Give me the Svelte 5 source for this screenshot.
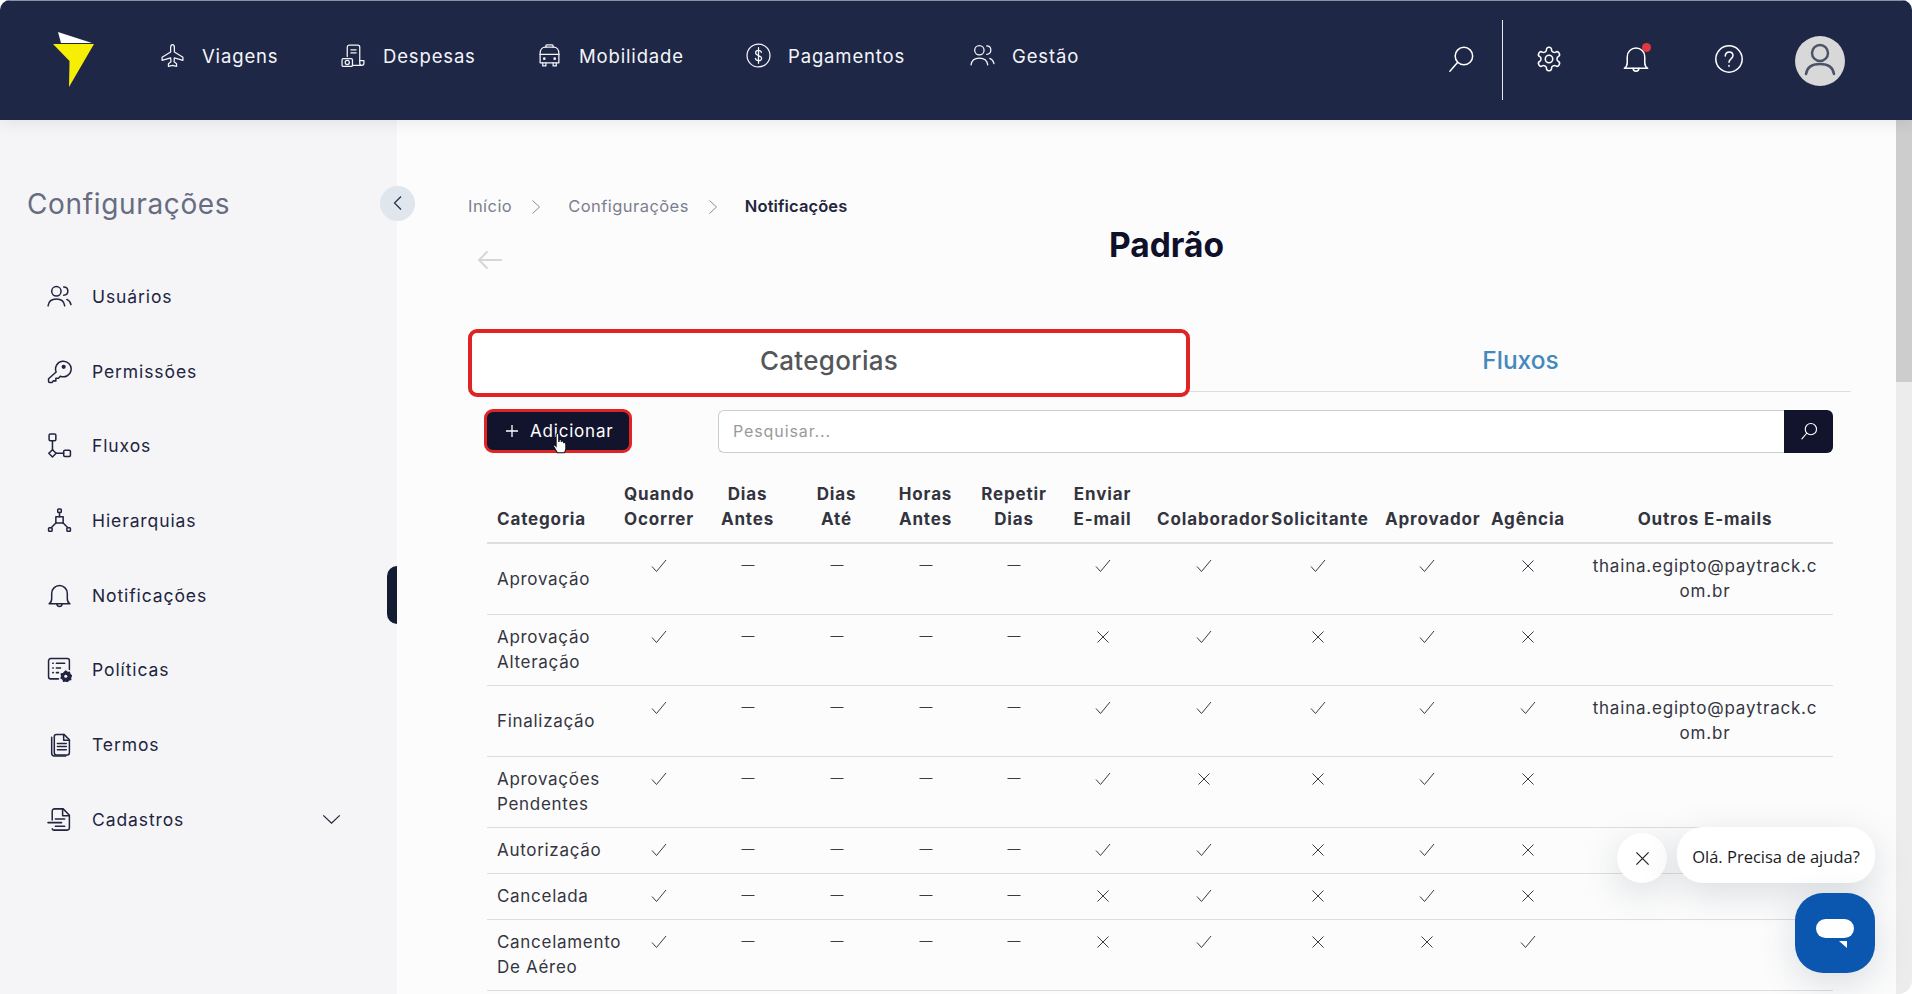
<script>
  const icons = {
    plane: '<path d="M12 1.500c-1.100 0-1.800 1.300-1.800 3v4.200L2 13.600v3l8.200-2.400.3 3.800-2.400 1.800v2.700l3.900-1 3.900 1v-2.700L13.500 18l.3-3.800 8.200 2.400v-3l-8.200-4.900V4.500c0-1.700-.7-3-1.800-3z"/>',
    expense: '<path d="M6 13V4a2 2 0 0 1 2-2h8a2 2 0 0 1 2 2v15.500c0 1.500 1 2 1.800 2H11"/><path d="M18 17h4v2.500a2 2 0 0 1-2 2"/><path d="M9.500 6.500h5M9.500 9.500h5"/><rect x="1" y="15" width="10" height="7.500" rx="1.200"/><circle cx="6" cy="18.700" r="2"/>',
    bus: '<path d="M8.500 4V2.800c0-.6.4-1 1-1h5c.6 0 1 .4 1 1V4"/><path d="M3 19V10c0-3.500 2-6 5-6h8c3 0 5 2.500 5 6v9z"/><path d="M3 11h18"/><path d="M5.500 19v3h3v-3M15.500 19v3h3v-3"/><circle cx="7" cy="15" r=".7"/><circle cx="17" cy="15" r=".7"/>',
    dollar: '<circle cx="12" cy="12" r="11"/><path d="M14.800 9c-.3-1.400-1.400-2-2.800-2-1.600 0-2.800.9-2.800 2.400 0 3.300 5.800 2 5.800 5.200 0 1.500-1.300 2.400-3 2.400-1.500 0-2.700-.8-3-2.200M12 4.500v15"/>',
    users: '<circle cx="9" cy="7" r="4.500"/><path d="M1 21c.6-4.500 3.800-6.500 8-6.500s7.400 2 8 6.500"/><path d="M16 2.800c2.400 0 4 1.700 4 4s-1.600 4-4 4M19 14.800c2 .8 3.500 2.500 4 5"/>',
    search: '<circle cx="14.500" cy="9.500" r="7.500"/><path d="M9 15 2.500 22.500"/>',
    gear: '<path d="M12.220 2h-.44a2 2 0 0 0-2 2v.18a2 2 0 0 1-1 1.730l-.43.25a2 2 0 0 1-2 0l-.15-.08a2 2 0 0 0-2.730.730l-.22.380a2 2 0 0 0 .730 2.730l.15.1a2 2 0 0 1 1 1.720v.51a2 2 0 0 1-1 1.740l-.15.09a2 2 0 0 0-.730 2.730l.22.380a2 2 0 0 0 2.730.730l.15-.08a2 2 0 0 1 2 0l.43.25a2 2 0 0 1 1 1.730V20a2 2 0 0 0 2 2h.44a2 2 0 0 0 2-2v-.18a2 2 0 0 1 1-1.730l.43-.25a2 2 0 0 1 2 0l.15.08a2 2 0 0 0 2.730-.730l.22-.39a2 2 0 0 0-.730-2.730l-.15-.08a2 2 0 0 1-1-1.740v-.5a2 2 0 0 1 1-1.740l.15-.09a2 2 0 0 0 .730-2.730l-.22-.38a2 2 0 0 0-2.730-.730l-.15.08a2 2 0 0 1-2 0l-.43-.25a2 2 0 0 1-1-1.730V4a2 2 0 0 0-2-2z"/><circle cx="12" cy="12" r="3.200"/>',
    bell: '<path d="M2 20c1.500-1 2.500-3 2.500-5V10a7.500 7.500 0 0 1 15 0v5c0 2 1 4 2.500 5z"/><path d="M9.500 20a2.500 2.500 0 0 0 5 0"/>',
    help: '<circle cx="12" cy="12" r="11.300"/><path d="M8.800 9.500C8.800 7.400 10.300 6 12.100 6c1.900 0 3.300 1.300 3.300 3.100 0 2.700-3.400 2.900-3.400 5.600M12 17.500v.8"/>',
    key: '<path d="M8.800 12.500a7.500 7.500 0 1 1 4 4L11 18.500H8.500V21H6l-1 1.500H2.500a1 1 0 0 1-1-1V19z"/><circle cx="16" cy="7.500" r="1.300" fill="currentColor"/>',
    flow: '<rect x="2" y="1" width="6.500" height="6.500" rx="1.200"/><path d="M5.250 7.500v8.500"/><path d="M5.250 16l3.500 3.500-3.500 3.500-3.500-3.500z"/><path d="M8.750 19.500h7.250"/><rect x="16" y="16.500" width="6.500" height="6" rx="1.200"/>',
    tree: '<rect x="10.300" y="1" width="3.400" height="3.400" rx=".8"/><path d="M12 4.400v4"/><rect x="8.500" y="8.400" width="7" height="6" /><path d="M8.500 14.400 4 19M15.500 14.400 20 19"/><rect x="1.500" y="19" width="3.400" height="3.400" rx=".8"/><rect x="19.100" y="19" width="3.400" height="3.400" rx=".8"/>',
    doccog: '<path d="M11 21H3.500a2 2 0 0 1-2-2V3.500a2 2 0 0 1 2-2h16a2 2 0 0 1 2 2V12"/><path d="M5.500 6h.5M9 6h8M5.500 10.500h.5M9 10.500h4M5.500 15h.5M9 15h2"/><path d="M18 13.500l1.500 1.500 2-.3.5 2 1.500 1.300-1 1.700.2 2-2 .5-1.200 1.500-1.500-1-2 .5-.7-2-1.800-1 .7-1.800-.5-2 2-.5z" fill="currentColor"/><circle cx="18" cy="18.500" r="1.500" fill="#f5f5f8" stroke="none"/>',
    docs: '<path d="M7 20V4.500a2 2 0 0 1 2-2h7.500l5 5V20a2 2 0 0 1-2 2H9a2 2 0 0 1-2-2z"/><path d="M4.500 5v15.500A2.500 2.500 0 0 0 7 23h11"/><path d="M16 2.500V8h5.500M10 11h8.500M10 14h8.500M10 17h8.500"/>',
    form: '<path d="M5 12.500V4a2.200 2.200 0 0 1 2.200-2.200h8.300L21.500 8v12a2.200 2.200 0 0 1-2.200 2.200H6.500A2 2 0 0 1 5 21"/><path d="M15 2v6.500h6.500"/><path d="M1 15h13M8 11.500h9M8 18.500h9"/>'
  };

  const nav = [
    { icon: 'plane', label: 'Viagens' },
    { icon: 'expense', label: 'Despesas' },
    { icon: 'bus', label: 'Mobilidade' },
    { icon: 'dollar', label: 'Pagamentos' },
    { icon: 'users', label: 'Gestão' }
  ];

  const menu = [
    { icon: 'users', label: 'Usuários' },
    { icon: 'key', label: 'Permissões' },
    { icon: 'flow', label: 'Fluxos' },
    { icon: 'tree', label: 'Hierarquias' },
    { icon: 'bell', label: 'Notificações', active: true },
    { icon: 'doccog', label: 'Políticas' },
    { icon: 'docs', label: 'Termos' },
    { icon: 'form', label: 'Cadastros', caret: true }
  ];

  const widths = [127, 89, 89, 89, 89, 88, 89, 114, 114, 104, 98, 256];

  const headers = [
    ['Categoria'], ['Quando', 'Ocorrer'], ['Dias', 'Antes'], ['Dias', 'Até'], ['Horas', 'Antes'], ['Repetir', 'Dias'],
    ['Enviar', 'E-mail'], ['Colaborador'], ['Solicitante'], ['Aprovador'], ['Agência'], ['Outros E-mails']
  ];

  const email = ['thaina.egipto@paytrack.c', 'om.br'];

  // 1 = check, 0 = cross, on the last five flag columns
  const rows = [
    { name: 'Aprovação', flags: [1, 1, 1, 1, 0], email },
    { name: 'Aprovação Alteração', flags: [0, 1, 0, 1, 0] },
    { name: 'Finalização', flags: [1, 1, 1, 1, 1], email },
    { name: 'Aprovações Pendentes', flags: [1, 0, 0, 1, 0] },
    { name: 'Autorização', flags: [1, 1, 0, 1, 0] },
    { name: 'Cancelada', flags: [0, 1, 0, 1, 0] },
    { name: 'Cancelamento De Aéreo', flags: [0, 1, 0, 0, 1] }
  ];
</script>

{#snippet icon(name, cls)}
  <svg class={cls} viewBox="0 0 24 24" fill="none" stroke="currentColor" stroke-linecap="round" stroke-linejoin="round">{@html icons[name]}</svg>
{/snippet}

{#snippet check()}
  <svg class="mark" viewBox="0 0 16 14" fill="none" stroke="currentColor"><path d="M1 7.500 5.500 12.500 15 1"/></svg>
{/snippet}

{#snippet cross()}
  <svg class="mark" viewBox="0 0 16 14" fill="none" stroke="currentColor"><path d="M2.500 1.500 13.500 12.500M13.500 1.500 2.500 12.500"/></svg>
{/snippet}

{#snippet dash()}
  <svg class="mark" viewBox="0 0 16 14" fill="none" stroke="currentColor"><path d="M1.500 6.500h13"/></svg>
{/snippet}

<div class="window">
  <header class="topbar">
    <svg class="logo" viewBox="0 0 42 56">
      <path d="M5 0 39 11 8 11z" fill="#fff"/>
      <path d="M0 12H41L16 55 16.500 29z" fill="#f7ee06"/>
    </svg>
    <nav class="mainnav">
      {#each nav as item}
        <a class="navitem">
          {@render icon(item.icon, 'navicon')}
          <span>{item.label}</span>
        </a>
      {/each}
    </nav>
    <div class="tools">
      {@render icon('search', 'tool searchtool')}
      <span class="divider"></span>
      {@render icon('gear', 'tool')}
      <span class="bellwrap">
        {@render icon('bell', 'tool')}
        <span class="dot"></span>
      </span>
      {@render icon('help', 'tool')}
      <span class="avatar">
        <svg viewBox="0 0 50 50" fill="none" stroke="#4d5468" stroke-width="2.500"><circle cx="25" cy="17" r="8"/><path d="M11 38c1-7 6-10 14-10s13 3 14 10" stroke-linecap="round"/></svg>
      </span>
    </div>
  </header>

  <div class="body">
    <aside class="sidebar">
      <div class="sidehead">
        <h2>Configurações</h2>
        <button class="collapse" aria-label="Recolher">
          <svg viewBox="0 0 12 16" fill="none" stroke="currentColor" stroke-width="1.300"><path d="M9 1.500 2.500 8 9 14.500"/></svg>
        </button>
      </div>
      <ul class="menu">
        {#each menu as item}
          <li class:active={item.active}>
            {@render icon(item.icon, 'menuicon')}
            <span>{item.label}</span>
            {#if item.caret}
              <svg class="caret" viewBox="0 0 20 12" fill="none" stroke="currentColor" stroke-width="1.400"><path d="M1 1.500 10 10 19 1.500"/></svg>
            {/if}
          </li>
        {/each}
      </ul>
    </aside>

    <main class="content">
      <div class="crumbs">
        <span>Início</span>
        <svg viewBox="0 0 10 16" fill="none" stroke="currentColor"><path d="M1.500 1.500 8.500 8 1.500 14.500"/></svg>
        <span>Configurações</span>
        <svg viewBox="0 0 10 16" fill="none" stroke="currentColor"><path d="M1.500 1.500 8.500 8 1.500 14.500"/></svg>
        <strong>Notificações</strong>
      </div>
      <div class="titlerow">
        <svg class="back" viewBox="0 0 26 20" fill="none" stroke="currentColor" stroke-width="2"><path d="M25 10H2M10.500 1.500 2 10l8.500 8.500"/></svg>
        <h1>Padrão</h1>
      </div>

      <div class="tabs">
        <button class="tab current">Categorias</button>
        <button class="tab">Fluxos</button>
      </div>

      <div class="toolbar">
        <button class="add">
          <svg viewBox="0 0 14 14" fill="none" stroke="currentColor" stroke-width="1.300"><path d="M7 1v12M1 7h12"/></svg>
          Adicionar
          <svg class="cursor" viewBox="0 0 16 24"><path d="M5 1.500c.8 0 1.300.6 1.300 1.400V9h.4V7.500c1-.6 1.800-.2 2 .5v1h.4c.8-.6 1.700-.3 1.900.5v.8h.4c.8-.4 1.700 0 1.700 1V16c0 2-1 3-1.500 4H5l-3.500-6c-.5-1 .5-2 1.600-1.200l.7.900V2.900c0-.8.500-1.400 1.200-1.400z" fill="#fff" stroke="#111" stroke-width="1"/></svg>
        </button>
        <div class="searchbox">
          <input placeholder="Pesquisar..." />
          <button class="go" aria-label="Pesquisar">{@render icon('search', 'goicon')}</button>
        </div>
      </div>

      <table>
        <colgroup>
          {#each widths as w}
            <col style="width:{w}px" />
          {/each}
        </colgroup>
        <thead>
          <tr>
            {#each headers as lines, i}
              <th class:left={i === 0}>
                {#each lines as line}<span>{line}</span>{/each}
              </th>
            {/each}
          </tr>
        </thead>
        <tbody>
          {#each rows as row}
            <tr>
              <td class="left name">{row.name}</td>
              <td>{@render check()}</td>
              <td>{@render dash()}</td>
              <td>{@render dash()}</td>
              <td>{@render dash()}</td>
              <td>{@render dash()}</td>
              {#each row.flags as flag}
                <td>
                  {#if flag}{@render check()}{:else}{@render cross()}{/if}
                </td>
              {/each}
              <td class="mail">
                {#if row.email}
                  {#each row.email as line}<span>{line}</span>{/each}
                {/if}
              </td>
            </tr>
          {/each}
        </tbody>
      </table>
    </main>

    <div class="scrollbar"><span></span></div>
  </div>

  <div class="chat">
    <div class="hint">
      <button class="hintclose" aria-label="Fechar">
        <svg viewBox="0 0 16 16" fill="none" stroke="currentColor" stroke-width="1.300"><path d="M1.500 1.500 14.500 14.500M14.500 1.500 1.500 14.500"/></svg>
      </button>
      <div class="bubble">Olá. Precisa de ajuda?</div>
    </div>
    <button class="chatbtn" aria-label="Abrir chat">
      <svg viewBox="0 0 40 32"><rect x="1" y="1" width="38" height="19" rx="9.500" fill="#fff"/><path d="M24 23h8v7z" fill="#fff"/></svg>
    </button>
  </div>
</div>

<style>
  :global(body) {
    margin: 0;
    background: #fff;
    font-family: Inter, "Noto Sans", sans-serif;
  }

  .window {
    position: relative;
    width: 1912px;
    height: 994px;
    display: flex;
    flex-direction: column;
    overflow: hidden;
    border-radius: 10px 10px 14px 0;
    background: #fcfcfc;
  }

  .topbar {
    flex: none;
    height: 119px;
    border-top: 1px solid #8d90a3;
    background: #1f2747;
    color: #fff;
    display: flex;
    align-items: center;
    box-shadow: 0 4px 14px rgba(0, 0, 0, 0.07);
    z-index: 1;
  }

  .logo {
    width: 42px;
    height: 56px;
    margin: 0 0 1px 53px;
    flex: none;
  }

  .mainnav {
    display: grid;
    grid-template-columns: 181px 196px 209px 224px auto;
    align-items: center;
    margin-left: 65px;
    margin-bottom: 10px;
  }

  .navitem {
    display: flex;
    align-items: center;
    gap: 17px;
    font-size: 18.500px;
    letter-spacing: 0.85px;
    color: #f4f5f8;
  }

  .navitem :global(.navicon) {
    width: 25px;
    height: 25px;
    stroke-width: 1.200;
  }

  .tools {
    margin-left: auto;
    margin-right: 67px;
    display: flex;
    align-items: center;
  }

  .tools :global(.tool) {
    width: 28px;
    height: 28px;
    stroke-width: 1.300;
    display: block;
    margin-right: 59px;
    margin-bottom: 4px;
  }

  .tools :global(.searchtool) {
    margin-right: 27px;
  }

  .divider {
    width: 1px;
    height: 80px;
    background: #e8e9ee;
    margin-right: 32px;
    margin-bottom: 1px;
  }

  .bellwrap {
    position: relative;
    margin-right: 6px;
  }

  .dot {
    position: absolute;
    left: 20px;
    top: -2px;
    width: 9px;
    height: 9px;
    border-radius: 50%;
    background: #e2383f;
  }

  .avatar {
    width: 50px;
    height: 50px;
    border-radius: 50%;
    background: #d8d8d8;
    margin-left: -7px;
  }

  .avatar svg {
    display: block;
    width: 50px;
    height: 50px;
  }

  .body {
    flex: 1;
    min-height: 0;
    display: flex;
  }

  .sidebar {
    flex: none;
    width: 397px;
    background: #f5f5f8;
    position: relative;
  }

  .sidehead {
    display: flex;
    align-items: center;
    justify-content: space-between;
    padding: 65px 0 0 27px;
    height: 36px;
  }

  h2 {
    margin: 1px 0 0;
    font-size: 28px;
    font-weight: 400;
    color: #676c80;
    letter-spacing: 0.65px;
  }

  .collapse {
    width: 35px;
    height: 35px;
    margin-right: -18px;
    border: 0;
    padding: 0;
    border-radius: 50%;
    background: #dfe6ee;
    color: #2d3346;
    display: flex;
    align-items: center;
    justify-content: center;
    position: relative;
  }

  .collapse svg {
    width: 12px;
    height: 16px;
  }

  .menu {
    list-style: none;
    margin: 38px 0 0;
    padding: 0;
  }

  .menu li {
    position: relative;
    height: 74.700px;
    padding-left: 47px;
    display: flex;
    align-items: center;
    gap: 20px;
    font-size: 17.500px;
    color: #22243f;
    letter-spacing: 0.9px;
  }

  .menu :global(.menuicon) {
    width: 25px;
    height: 25px;
    stroke-width: 1.450;
    flex: none;
  }

  .menu li.active::after {
    content: "";
    position: absolute;
    right: 0;
    top: 8px;
    width: 10px;
    height: 58px;
    border-radius: 10px 0 0 10px;
    background: #131c33;
  }

  .caret {
    position: absolute;
    left: 322px;
    width: 19px;
    height: 11px;
  }

  .content {
    flex: 1;
    min-width: 0;
    padding: 0 45px 0 71px;
    overflow: hidden;
  }

  .crumbs {
    display: flex;
    align-items: center;
    height: 24px;
    margin-top: 74px;
    font-size: 16.500px;
    letter-spacing: 0.45px;
    color: #7b7f8e;
  }

  .crumbs svg {
    width: 10px;
    height: 16px;
    margin: 2px 27px 0 19px;
    color: #8a8d99;
  }

  .crumbs strong {
    font-weight: 600;
    letter-spacing: 0.1px;
    color: #23263b;
  }

  .titlerow {
    position: relative;
    height: 40px;
    margin-top: 7px;
  }

  .back {
    position: absolute;
    left: 9px;
    top: 25px;
    width: 26px;
    height: 20px;
    color: #d6d6d9;
  }

  h1 {
    margin: 0;
    text-align: center;
    font-size: 33.500px;
    font-weight: 700;
    line-height: 40px;
    color: #0f1029;
    transform: translateX(7px);
  }

  .tabs {
    display: flex;
    margin-top: 64px;
    height: 62px;
    border-bottom: 1px solid #dedede;
  }

  .tab {
    flex: 1;
    border: 0;
    background: none;
    font: inherit;
    font-size: 24.500px;
    font-weight: 500;
    color: #4489bb;
  }

  .tab.current {
    flex: none;
    width: 722px;
    height: 68px;
    box-sizing: border-box;
    border: 4px solid #e02424;
    border-radius: 9px;
    background: #fff;
    color: #55565a;
    font-size: 26px;
    letter-spacing: 0.3px;
    padding: 0 0 6px;
  }

  .toolbar {
    display: flex;
    align-items: center;
    margin: 17px 18px 0 16px;
    height: 44px;
  }

  .add {
    position: relative;
    width: 148px;
    height: 44px;
    box-sizing: border-box;
    border: 3px solid #e02424;
    border-radius: 9px;
    background: #12132d;
    color: #fff;
    font: inherit;
    font-size: 17px;
    display: flex;
    align-items: center;
    gap: 11px;
    padding: 0 0 0 18px;
    letter-spacing: 0.8px;
  }

  .add > svg:first-child {
    width: 14px;
    height: 14px;
  }

  .cursor {
    position: absolute;
    left: 65px;
    top: 20px;
    width: 17px;
    height: 25px;
  }

  .searchbox {
    flex: 1;
    margin-left: 86px;
    height: 43px;
    display: flex;
  }

  .searchbox input {
    flex: 1;
    min-width: 0;
    box-sizing: border-box;
    border: 1px solid #ccc;
    border-right: 0;
    border-radius: 6px 0 0 6px;
    background: #fff;
    padding: 0 14px;
    font: inherit;
    font-size: 16px;
    letter-spacing: 0.9px;
  }

  .searchbox input::placeholder {
    color: #9a9a9a;
  }

  .go {
    width: 49px;
    border: 0;
    padding: 0;
    border-radius: 0 6px 6px 0;
    background: #12132d;
    color: #fff;
    display: flex;
    align-items: center;
    justify-content: center;
  }

  .go :global(.goicon) {
    width: 18px;
    height: 18px;
    stroke-width: 1.500;
  }

  table {
    table-layout: fixed;
    width: 1346px;
    margin: 20px 0 0 19px;
    border-collapse: collapse;
    font-size: 17px;
    line-height: 25px;
    color: #34353f;
  }

  th {
    padding: 9px 10px 10px;
    vertical-align: bottom;
    text-align: center;
    font-weight: 700;
    letter-spacing: 0.85px;
    color: #33343e;
    border-bottom: 2px solid #dedede;
  }

  th span {
    display: block;
    white-space: nowrap;
  }

  th.left,
  td.left {
    text-align: left;
    padding-left: 10px;
  }

  td {
    padding: 10px 0;
    vertical-align: top;
    text-align: center;
    border-bottom: 1px solid #dedede;
    letter-spacing: 0.7px;
  }

  td.name {
    vertical-align: middle;
  }

  td.mail span {
    display: block;
    white-space: nowrap;
    letter-spacing: 0.8px;
  }

  .mark {
    display: block;
    margin: 5px auto 0;
    width: 16px;
    height: 14px;
    color: #3a3b44;
    stroke-width: 1;
  }

  .scrollbar {
    flex: none;
    width: 16px;
    background: #ececec;
  }

  .scrollbar span {
    display: block;
    width: 100%;
    height: 262px;
    background: #cdcdcd;
  }

  .chat {
    position: absolute;
    right: 37px;
    bottom: 21px;
    display: flex;
    flex-direction: column;
    align-items: flex-end;
    gap: 10px;
  }

  .hint {
    display: flex;
    align-items: flex-end;
    gap: 10px;
  }

  .hintclose {
    width: 50px;
    height: 50px;
    border: 0;
    padding: 0;
    border-radius: 50%;
    background: #fff;
    color: #222;
    display: flex;
    align-items: center;
    justify-content: center;
    box-shadow: 0 10px 36px rgba(60, 80, 100, 0.18);
  }

  .hintclose svg {
    width: 15px;
    height: 15px;
  }

  .bubble {
    height: 56px;
    width: 198px;
    box-sizing: border-box;
    padding-top: 2px;
    border-radius: 26px;
    background: #fff;
    display: flex;
    align-items: center;
    justify-content: center;
    font-family: "Open Sans", sans-serif;
    font-size: 16.500px;
    color: #1b1b1f;
    box-shadow: 0 10px 36px rgba(60, 80, 100, 0.18);
  }

  .chatbtn {
    width: 80px;
    height: 80px;
    border: 0;
    padding: 0;
    border-radius: 28px;
    background: #0b57b0;
    display: flex;
    align-items: center;
    justify-content: center;
    box-shadow: 0 10px 36px rgba(60, 80, 100, 0.18);
  }

  .chatbtn svg {
    width: 40px;
    height: 32px;
    margin-top: 2px;
  }
</style>
